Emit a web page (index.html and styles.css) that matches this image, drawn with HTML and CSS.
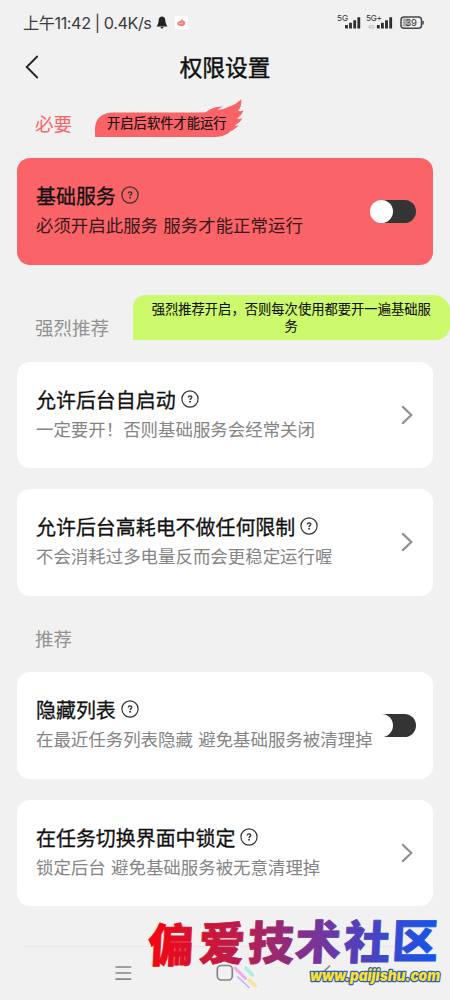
FILE: index.html
```html
<!DOCTYPE html>
<html lang="zh-CN">
<head>
<meta charset="utf-8">
<meta name="viewport" content="width=device-width, initial-scale=1">
<title>权限设置</title>
<link rel="stylesheet" href="styles.css">
</head>
<body>
<svg class="defs" width="0" height="0">
  <symbol id="help" viewBox="0 0 18 18"><circle cx="9" cy="9" r="8.1" fill="none" stroke="currentColor" stroke-width="1.2"/><path d="M7.3 7.5Q7.4 5.9 9 5.9Q10.8 6 10.7 7.4Q10.6 8.3 9.6 8.8Q9.1 9.1 9.1 10" fill="none" stroke="currentColor" stroke-width="1.4"/><circle cx="9.1" cy="11.8" r=".95" fill="currentColor"/></symbol>
  <symbol id="arrow" viewBox="0 0 12 20"><path d="M1.8 1.9L10.3 10L1.8 18.1" fill="none" stroke="#929292" stroke-width="2.2" stroke-linecap="round"/></symbol>
</svg>
<header class="status">
  <span class="clock">上午11:42 | 0.4K/s</span>
  <svg class="bell" viewBox="0 0 12 13"><path d="M6 .5C3.2.8 2.7 2.7 2.6 5.5L1.8 8.4L.5 10.4H11.5L10.2 8.4L9.4 5.5C9.3 2.7 8.8.8 6 .5ZM4.4 11H7.6Q7 12.5 6 12.5T4.4 11Z" fill="#222"/></svg>
  <svg class="app" viewBox="0 0 13 13"><rect width="13" height="13" rx="2" fill="#fff"/><path d="M2.2 8C2.2 5.5 4 5 5 5.3L7.2 2.8L7.5 4.5Q10.5 5 10.2 7.4C10 9.7 7.5 10.2 6 10C3.7 9.8 2.3 9.1 2.2 8Z" fill="#f47f7c"/><path d="M4 7.3Q6 8.6 8 6.6" fill="none" stroke="#fbc4c1"/></svg>
  <svg class="signals" viewBox="0 0 90 18">
    <g class="net"><text x="0" y="7.3" textLength="11">5G</text><text x="29" y="7.3" textLength="16">5G+</text></g>
    <text class="tiny" x="31" y="14.5">4G</text>
    <path d="M9.5 14.5V11M13.5 14.5V8.7M17.7 14.5V6.3M21.8 14.5V3.2M41.3 14.5V11M45.4 14.5V8.7M49.5 14.5V6.3M53.7 14.5V3.2" stroke="#2c2c2c" stroke-width="2.8"/>
    <rect x="64" y="3" width="20.5" height="11.2" rx="3" fill="none" stroke="#444" stroke-width="1.5"/>
    <path d="M86 7V10.5" stroke="#444" stroke-width="1.5"/><rect x="65.8" y="4.6" width="6.5" height="8" rx="1" fill="#aaa"/>
    <text class="power" x="68.5" y="12.3" textLength="11.5">39</text>
  </svg>
</header>
<nav class="topbar">
  <svg class="back" viewBox="0 0 14 24"><path d="M12.2 1.5L1.7 12L12.2 22.5" fill="none" stroke="#222" stroke-width="1.8" stroke-linecap="round"/></svg>
  <h1>权限设置</h1>
</nav>
<main>
  <div class="section required"><h2>必要</h2>
    <div class="flame"><svg viewBox="0 0 150 40"><path d="M0 38V29Q1 14 18 13.5H108Q112 13 115 10.5Q120 7.5 128 7.5Q124 9 122.5 11Q128 11 133 8Q142 5 146.2 0Q147 7 143 12Q146 12.5 148.5 11.5Q146 17 142 19.5Q145 20.5 147.5 19Q145 24 139.5 26.5Q142 27 144 26Q139 31 136 32Q131 37.5 120 38Z" fill="#fa6367"/></svg><span>开启后软件才能运行</span></div>
  </div>
  <section class="card red">
    <div class="copy"><h3>基础服务<svg><use href="#help"/></svg></h3><p>必须开启此服务 服务才能正常运行</p></div><i class="toggle"></i>
  </section>
  <div class="section strong"><h2>强烈推荐</h2><div class="lime">强烈推荐开启，否则每次使用都要开一遍基础服务</div></div>
  <section class="card">
    <div class="copy"><h3>允许后台自启动<svg><use href="#help"/></svg></h3><p>一定要开！否则基础服务会经常关闭</p></div><svg class="arrow"><use href="#arrow"/></svg>
  </section>
  <section class="card follow">
    <div class="copy"><h3>允许后台高耗电不做任何限制<svg><use href="#help"/></svg></h3><p>不会消耗过多电量反而会更稳定运行喔</p></div><svg class="arrow"><use href="#arrow"/></svg>
  </section>
  <div class="section suggest"><h2>推荐</h2></div>
  <section class="card">
    <div class="copy"><h3>隐藏列表<svg><use href="#help"/></svg></h3><p>在最近任务列表隐藏 避免基础服务被清理掉</p></div><i class="toggle"></i>
  </section>
  <section class="card follow">
    <div class="copy"><h3>在任务切换界面中锁定<svg><use href="#help"/></svg></h3><p>锁定后台 避免基础服务被无意清理掉</p></div><svg class="arrow"><use href="#arrow"/></svg>
  </section>
</main>
<footer>
  <svg viewBox="0 0 450 94">
    <defs><linearGradient id="ink" gradientUnits="userSpaceOnUse" x1="148" y1="0" x2="438" y2="0"><stop stop-color="#f50510"/><stop offset=".35" stop-color="#b22056"/><stop offset=".65" stop-color="#653aab"/><stop offset="1" stop-color="#1456ec"/></linearGradient></defs>
    <path d="M22 40.5H428" stroke="#e8e8e8"/>
    <g fill="none" stroke="#858585" stroke-width="1.7"><path d="M115.5 61H131.2M115.5 67H131.2M115.5 73.2H131.2"/><rect x="217.3" y="59.5" width="15" height="14.5" rx="4"/><path d="M330 59.5L322 67.5L330 75.5"/></g>
    <g stroke-linecap="round"><path d="M235 62L245.5 72.5" stroke="#eea9ed" stroke-width="3"/><path d="M246 62L252.5 69" stroke="#aaf0e3" stroke-width="3.5"/><path d="M249 74L255.5 80" stroke="#ffe0a3" stroke-width="3.5"/><path d="M238 71L249 81.5" stroke="#b9b9ee" stroke-width="1.7"/></g>
    <text class="brand" x="148 199 248 295 344 392" y="56 54 54 53 53 52" fill="url(#ink)" stroke="url(#ink)">偏爱技术社区</text>
    <text class="site" x="310" y="74.5" textLength="130" lengthAdjust="spacingAndGlyphs">www.paijishu.com</text>
  </svg>
</footer>
</body>
</html>
```

FILE: styles.css
```css
* { box-sizing: border-box; }
body { margin: 0; width: 450px; height: 1000px; overflow: hidden; background: #f1f1f1; color: #111; font-family: "Noto Sans CJK SC", sans-serif; }
h1, h2, h3, p { margin: 0; font-weight: 400; white-space: nowrap; }
svg { display: block; }
.defs { height: 0; position: absolute; }
.status { height: 45px; padding-left: 23px; display: flex; align-items: center; color: #3b3b3b; }
.clock { width: 129px; font: 16.2px/24px Inter, "Noto Sans CJK SC", sans-serif; white-space: nowrap; letter-spacing: -.42px; }
.bell { width: 12px; height: 13px; margin-left: 4px; }
.app { width: 13px; height: 13px; margin-left: 7px; }
.signals { width: 90px; height: 18px; margin-left: 149px; font-family: Inter, sans-serif; }
.net { font-size: 8.2px; fill: #333; }
.tiny { font-size: 4.5px; fill: #999; }
.power { font-size: 9.5px; fill: #333; }
.topbar { height: 45px; display: grid; grid-template-columns: 26px 1fr 26px; padding-top: 10px; }
.back { width: 14px; height: 24px; margin-left: 25px; }
.topbar h1 { text-align: center; font-size: 22.7px; line-height: 24px; -webkit-text-stroke: .45px #111; }
.section { display: flex; padding-left: 35px; }
.section h2 { font-size: 18.5px; line-height: 26px; color: #929292; }
.required { height: 68px; }
.required h2 { color: #fa6367; width: 60px; padding-top: 20px; }
.flame { width: 150px; height: 40px; margin-top: 9px; display: grid; }
.flame svg, .flame span { grid-area: 1 / 1; }
.flame svg { width: 150px; height: 40px; }
.flame span { padding: 15px 0 0 12px; font-size: 13.3px; line-height: 18px; white-space: nowrap; -webkit-text-stroke: .15px #111; }
.card { width: 416px; height: 106.5px; margin: 0 17px; padding: 23px 17px 0 19px; border-radius: 13px; background: #fff; display: flex; position: relative; }
.copy { width: 334px; }
.card h3 { font-size: 19.95px; line-height: 30px; display: flex; -webkit-text-stroke: .3px #111; }
.card h3 svg { width: 18px; height: 18px; margin: 5px 0 0 5px; color: #333; -webkit-text-stroke: 0; }
.card p { font-size: 17.45px; line-height: 28px; color: #858585; word-spacing: 1.4px; }
.red { background: #fa6367; }
.red p { color: #39191a; }
.toggle { flex: none; width: 46px; height: 23px; margin-top: 19px; border-radius: 12px; background: linear-gradient(90deg, transparent 11px, #343434 11px); }
.toggle::before { content: ""; display: block; width: 23px; height: 23px; border-radius: 50%; background: #fff; }
.arrow { width: 12px; height: 20px; margin: 20px 0 0 31px; }
.strong { height: 97px; }
.strong h2 { width: 97.5px; padding-top: 49px; }
.lime { width: 317.5px; height: 45.5px; margin-top: 30px; padding: 5px 17px 0; border-radius: 12px 16px 14px 0; background: #cdfa6c; text-align: center; font-size: 13.3px; line-height: 17.5px; -webkit-text-stroke: .1px #111; }
.follow { margin-top: 21px; }
.suggest { height: 76.5px; padding-top: 29px; }
footer { height: 94px; }
footer svg { width: 450px; height: 94px; }
.brand { font: 900 46px "Noto Sans CJK SC", sans-serif; stroke-width: .8px; stroke-linejoin: round; transform: skewX(-3deg); transform-origin: 290px 40px; }
.site { font: italic 900 15px Inter, sans-serif; fill: #ffe12a; stroke: #2860bd; stroke-width: 2.5px; paint-order: stroke; stroke-linejoin: round; }
```
